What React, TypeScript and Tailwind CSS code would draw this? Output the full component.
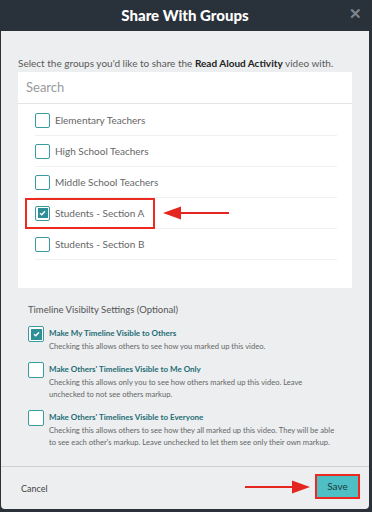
const groups = [
  { name: "Elementary Teachers", checked: false },
  { name: "High School Teachers", checked: false },
  { name: "Middle School Teachers", checked: false },
  { name: "Students - Section A", checked: true },
  { name: "Students - Section B", checked: false },
]

// descriptions are split where the reference wraps them
const settings = [
  {
    title: "Make My Timeline Visible to Others",
    desc: ["Checking this allows others to see how you marked up this video."],
    checked: true,
  },
  {
    title: "Make Others' Timelines Visible to Me Only",
    desc: [
      "Checking this allows only you to see how others marked up this video. Leave",
      "unchecked to not see others markup.",
    ],
    checked: false,
  },
  {
    title: "Make Others' Timelines Visible to Everyone",
    desc: [
      "Checking this allows others to see how they all marked up this video. They will be able",
      "to see each other's markup. Leave unchecked to let them see only their own markup.",
    ],
    checked: false,
  },
]

function Checkbox({ checked, size = "sm" }: { checked: boolean; size?: "sm" | "lg" }) {
  const box = size === "lg" ? "w-[16px] h-[16px]" : "w-[15px] h-[15px]"
  return (
    <div className={`${box} shrink-0 rounded-[2px] border-[1.5px] border-[#3a9aa1] bg-white p-[1.5px]`}>
      {checked && (
        <div className="w-full h-full bg-[#2f8f97] flex items-center justify-center">
          <svg width="7" height="6" viewBox="0 0 7 6">
            <path d="M1 3.2 L2.8 4.8 L6 1.2" stroke="white" strokeWidth="1.4" fill="none" />
          </svg>
        </div>
      )}
    </div>
  )
}

export default function App() {
  return (
    <div className="w-[372px] h-[512px] bg-[#2a3139] overflow-hidden" style={{ fontFamily: "Lato, 'Open Sans', sans-serif" }}>
      <div className="relative ml-[1px] w-[368px] h-[509px] bg-[#eceef0] rounded-b-[4px] flex flex-col">
        {/* header */}
        <div className="h-[31px] bg-[#29323b] flex items-center justify-center relative">
          <span className="text-white text-[15px] font-black">Share With Groups</span>
          <span className="absolute right-[7px] top-[6px] text-[#7d858c] text-[15px] font-bold leading-none">✕</span>
        </div>

        <div className="px-[17px]">
          <p className="mt-[26px] text-[10px] leading-[13px] text-[#5a5a5a] whitespace-nowrap">
            Select the groups you'd like to share the <b className="text-[#222]">Read Aloud Activity</b> video with.
          </p>

          <div className="mt-[2px] h-[32px] bg-white border-b border-[#e2e4e6] flex items-center px-[8px] text-[13px] text-[#9a9a9a]">
            Search
          </div>

          <div className="relative h-[184px] bg-white pt-[1px]">
            {groups.map((g) => (
              <div key={g.name} className="ml-[17px] mr-[15px] h-[31px] border-b border-[#f0f0f0] flex items-center gap-[5px]">
                <Checkbox checked={g.checked} />
                <span className="text-[10px] text-[#666]">{g.name}</span>
              </div>
            ))}
            <div className="absolute left-[7px] top-[94px] w-[130px] h-[31px] border-[2px] border-[#ec2a22]" />
            <svg className="absolute left-[144px] top-[102px]" width="68" height="14" viewBox="0 0 68 14">
              <path d="M18 6 H67 V8 H18 Z" fill="#e5251f" />
              <path d="M1 7 L19 0.5 V13.5 Z" fill="#e5251f" />
            </svg>
          </div>
        </div>

        <div className="pl-[27px] pr-[10px]">
          <p className="mt-[15px] text-[9.5px] leading-[13px] text-[#555]">Timeline Visibilty Settings (Optional)</p>
          <div className="mt-[10px] flex flex-col gap-[10px]">
            {settings.map((s) => (
              <div key={s.title} className="flex gap-[5px]">
                <Checkbox checked={s.checked} size="lg" />
                <div className="pt-[1px]">
                  <p className="text-[8px] font-bold text-[#236d74] leading-[13px]">{s.title}</p>
                  {s.desc.map((line) => (
                    <p key={line} className="text-[7.6px] text-[#666] leading-[12px] whitespace-nowrap">{line}</p>
                  ))}
                </div>
              </div>
            ))}
          </div>
        </div>

        <div className="mt-auto h-[43px] border-t border-[#cfd1d3] flex items-center justify-between pl-[20px] pr-[9px] relative">
          <span className="text-[9px] text-[#444] mt-[1px]">Cancel</span>
          <div className="border-[2px] border-[#ec2a22] mb-[3px]">
            <div className="w-[41px] h-[21px] bg-[#4ebfc4] flex items-center justify-center text-[10px] text-[#1d3d40]">Save</div>
          </div>
          <svg className="absolute left-[244px] top-[13px]" width="66" height="14" viewBox="0 0 66 14">
            <path d="M0 6 H48 V8 H0 Z" fill="#e5251f" />
            <path d="M65 7 L47 0.5 V13.5 Z" fill="#e5251f" />
          </svg>
        </div>
      </div>
    </div>
  )
}
